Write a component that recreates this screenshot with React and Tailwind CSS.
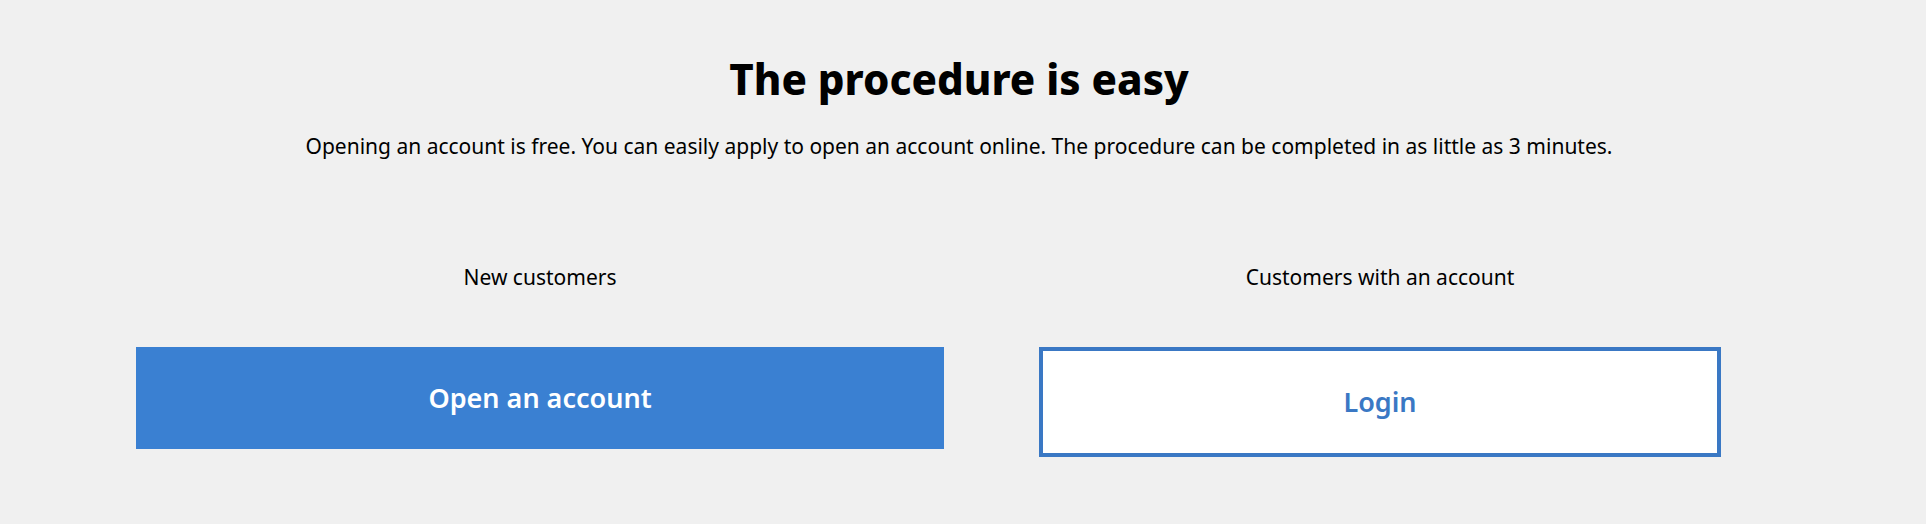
export default function App() {
  return (
    <div className="w-[1926px] h-[524px] bg-[#f0f0f0] text-black" style={{ fontFamily: '"Noto Sans", "Open Sans", sans-serif' }}>
      <div className="w-[1918px] flex flex-col items-center pt-[51px]">
        <h1 className="text-[42px] leading-[56px] font-extrabold">The procedure is easy</h1>
        <p className="mt-[25px] text-[21px] leading-[28px]">
          Opening an account is free. You can easily apply to open an account online. The procedure can be completed in as little as 3 minutes.
        </p>
      </div>
      <div className="ml-[136px] w-[1648px] grid grid-cols-2 gap-[32px] mt-[103px]">
        <div className="flex flex-col items-center">
          <div className="text-[21px] leading-[28px]">New customers</div>
          <button className="mt-[56px] w-[808px] h-[102px] bg-[#3a80d2] text-white text-[27px] font-semibold flex items-center justify-center">
            Open an account
          </button>
        </div>
        <div className="flex flex-col items-center">
          <div className="text-[21px] leading-[28px]">Customers with an account</div>
          <button className="mt-[56px] w-[682px] h-[110px] bg-white border-4 border-[#3a78c4] text-[#3a78c4] text-[27px] font-semibold flex items-center justify-center">
            Login
          </button>
        </div>
      </div>
    </div>
  );
}
